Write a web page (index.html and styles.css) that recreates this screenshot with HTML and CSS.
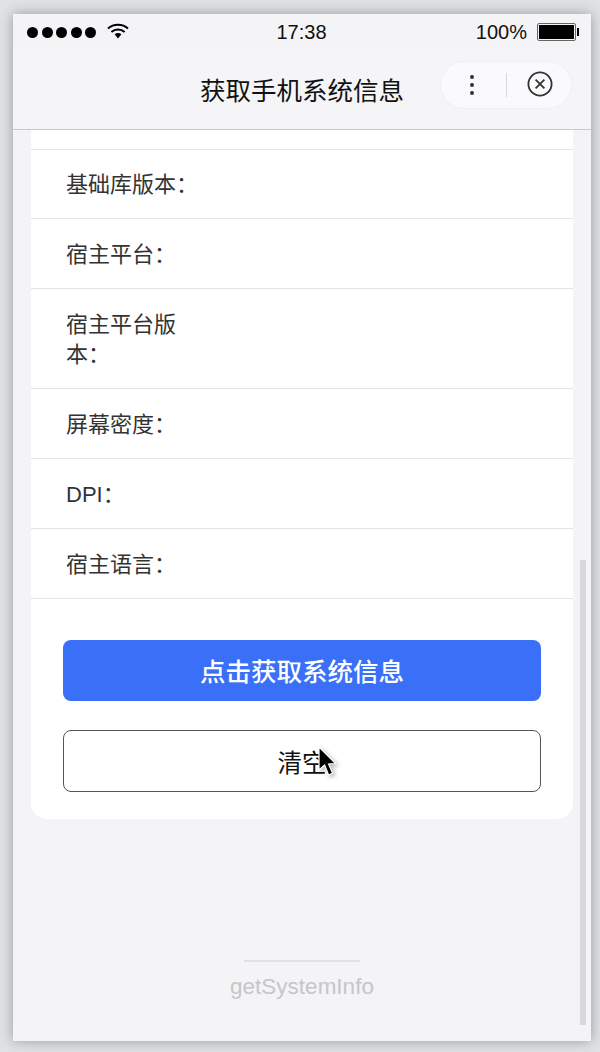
FILE: index.html
```html
<!DOCTYPE html>
<html lang="zh-CN">
<head>
    <meta charset="UTF-8">
    <meta name="viewport" content="width=device-width, initial-scale=1.0">
    <title>获取手机系统信息</title>
    <link rel="stylesheet" href="styles.css">
</head>
<body>

<div class="phone">
    <div class="status-bar">
        <div class="status-left">
            <div class="signal">
                <span></span><span></span><span></span><span></span><span></span>
            </div>
            <svg class="wifi" viewBox="0 0 22 16" width="22" height="16">
                <path d="M1 5.6C6.6.6 15.4.6 21 5.6" fill="none" stroke="#000" stroke-width="2"/>
                <path d="M4.4 9C8.2 5.7 13.8 5.7 17.6 9" fill="none" stroke="#000" stroke-width="2"/>
                <path d="M7.6 11.2C9.6 9.6 12.4 9.6 14.4 11.2L11 15.4Z" fill="#000"/>
            </svg>
        </div>
        <div class="status-time">17:38</div>
        <div class="status-right">
            <span>100%</span>
            <div class="battery"><div class="battery-level"></div></div>
        </div>
    </div>

    <div class="nav-bar">
        <div class="nav-title">获取手机系统信息</div>
        <div class="capsule">
            <div class="capsule-more"><span></span><span></span><span></span></div>
            <div class="capsule-line"></div>
            <svg class="capsule-close" viewBox="0 0 26 26" width="26" height="26">
                <circle cx="13" cy="13" r="11.6" fill="none" stroke="#333" stroke-width="1.8"/>
                <path d="M8.6 8.6L17.4 17.4M17.4 8.6L8.6 17.4" fill="none" stroke="#333" stroke-width="1.8"/>
            </svg>
        </div>
    </div>

    <div class="content">
        <div class="card">
            <div class="row-stub"></div>
            <div class="row row-first"><div class="row-label">基础库版本：</div></div>
            <div class="row"><div class="row-label">宿主平台：</div></div>
            <div class="row"><div class="row-label">宿主平台版本：</div></div>
            <div class="row"><div class="row-label">屏幕密度：</div></div>
            <div class="row"><div class="row-label">DPI：</div></div>
            <div class="row"><div class="row-label">宿主语言：</div></div>

            <div class="btn-area">
                <button class="btn btn-primary">点击获取系统信息</button>
                <button class="btn btn-default">清空</button>
            </div>
        </div>

        <div class="footer">
            <div class="footer-line"></div>
            <div class="footer-text">getSystemInfo</div>
        </div>
    </div>

    <div class="scrollbar"></div>
</div>

<svg class="cursor" viewBox="0 0 20 34" width="20" height="34">
    <path d="M2 1L2 24L7.6 19L11.6 29L15.6 27.2L11.6 18L18.6 17.6Z" fill="#000" stroke="#fff" stroke-width="1.2"/>
</svg>

</body>
</html>
```

FILE: styles.css
```css
body {
    font-family: 'Liberation Sans', 'Noto Sans CJK SC', sans-serif;
    margin: 0;
    height: 1052px;
    padding: 14px 9px 11px 13px;
    box-sizing: border-box;
    background-color: #e1e2e5;
    overflow: hidden;
}

.phone {
    position: relative;
    height: 1027px;
    background-color: #f4f3f6;
    box-shadow: 0 0 12px rgba(110, 115, 125, 0.65);
    display: flex;
    flex-direction: column;
}

.status-bar {
    display: grid;
    grid-template-columns: 1fr auto 1fr;
    align-items: center;
    height: 36px;
    padding: 0 15px 0 14px;
    color: #111;
    font-size: 20px;
}

.status-left {
    display: flex;
    align-items: center;
    gap: 11px;
}

.signal {
    display: flex;
    gap: 3.5px;
}

.signal span {
    width: 11px;
    height: 11px;
    border-radius: 50%;
    background-color: #000;
}

.wifi {
    margin-top: -3px;
}

.status-right {
    display: flex;
    justify-content: flex-end;
    align-items: center;
    gap: 10px;
}

.battery {
    position: relative;
    width: 39px;
    height: 18px;
    padding: 1px;
    box-sizing: border-box;
    border: 1px solid #666;
    border-radius: 2px;
}

.battery::after {
    content: '';
    position: absolute;
    right: -4px;
    top: 4px;
    width: 2px;
    height: 8px;
    background-color: #000;
}

.battery-level {
    height: 100%;
    background-color: #000;
}

.nav-bar {
    position: relative;
    display: flex;
    justify-content: center;
    align-items: center;
    height: 80px;
    padding-bottom: 2px;
    box-sizing: border-box;
    background-color: #f5f4f7;
    border-bottom: 1px solid #c9c9cb;
    color: #111;
    font-size: 25.5px;
}

.capsule {
    position: absolute;
    left: 427px;
    top: 11px;
    width: 132px;
    height: 48px;
    box-sizing: border-box;
    display: flex;
    align-items: center;
    border-radius: 24px;
    border: 1px solid #f0eff2;
    background-color: #faf9fb;
}

.capsule-more {
    display: flex;
    flex-direction: column;
    gap: 4px;
    margin-left: 29px;
}

.capsule-more span {
    width: 4px;
    height: 4px;
    border-radius: 50%;
    background-color: #333;
}

.capsule-line {
    width: 1px;
    height: 24px;
    margin-left: 32px;
    background-color: #d8d8da;
}

.capsule-close {
    margin-left: 20px;
    margin-top: -2px;
}

.content {
    flex: 1;
    padding: 0 18px;
}

.card {
    background-color: #fff;
    border-radius: 0 0 16px 16px;
}

.row-stub {
    height: 19px;
    border-bottom: 1px solid #e4e4e6;
}

.row {
    padding: 20.5px 35px 18.5px;
    border-bottom: 1px solid #e4e4e6;
    font-size: 22px;
    line-height: 30px;
    color: #333;
}

.row-first {
    padding: 19.5px 35px 18.5px;
}

.row-label {
    width: 140px;
}

.btn-area {
    padding: 41px 32px 27px;
}

.btn {
    display: block;
    width: 100%;
    box-sizing: border-box;
    border-radius: 8px;
    font-family: inherit;
    text-align: center;
}

.btn-primary {
    height: 61px;
    margin-bottom: 29px;
    padding-bottom: 3px;
    border: none;
    background-color: #3a6ff7;
    color: #fff;
    font-size: 25.5px;
    font-weight: 500;
}

.btn-default {
    height: 62px;
    border: 1px solid #555;
    background-color: #fff;
    color: #111;
    font-size: 24.5px;
}

.footer {
    display: flex;
    flex-direction: column;
    align-items: center;
    padding: 141px 0 0;
}

.footer-line {
    width: 116px;
    height: 2px;
    background-color: #e2e2e5;
}

.footer-text {
    margin-top: 11px;
    font-size: 22.5px;
    line-height: 28px;
    color: #c6c6c9;
}

.scrollbar {
    position: absolute;
    left: 567px;
    top: 546px;
    width: 6px;
    height: 465px;
    background-color: #d9d9dc;
}

.cursor {
    position: absolute;
    left: 317px;
    top: 746px;
    filter: drop-shadow(2px 2px 2px rgba(0, 0, 0, 0.3));
}
```
